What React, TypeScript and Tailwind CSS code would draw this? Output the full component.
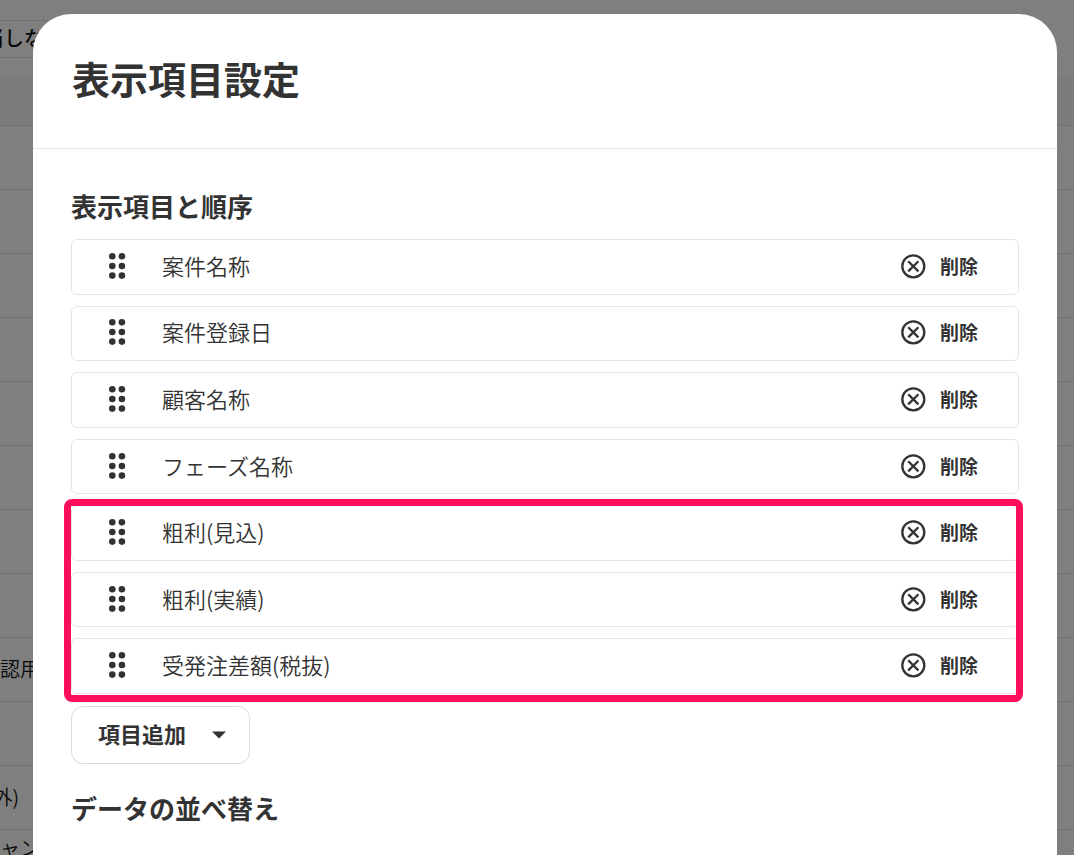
const items = [
  '案件名称',
  '案件登録日',
  '顧客名称',
  'フェーズ名称',
  '粗利(見込)',
  '粗利(実績)',
  '受発注差額(税抜)',
];

const tableRows = ['', '', '', '', '', '', '', '', '確認用', '', '(外)', 'キャンペ'];

function DragHandle() {
  return (
    <svg width="18" height="28" viewBox="0 0 18 28" fill="#333333" aria-hidden="true">
      <circle cx="4.3" cy="4.3" r="3.3" />
      <circle cx="13.9" cy="4.3" r="3.3" />
      <circle cx="4.3" cy="14" r="3.3" />
      <circle cx="13.9" cy="14" r="3.3" />
      <circle cx="4.3" cy="23.6" r="3.3" />
      <circle cx="13.9" cy="23.6" r="3.3" />
    </svg>
  );
}

function CircleX() {
  return (
    <svg width="26" height="26" viewBox="0 0 26 26" fill="none" stroke="#333333" strokeWidth="2.3" aria-hidden="true">
      <circle cx="13.3" cy="13.3" r="11" />
      <path d="M8.2 8.2 18.4 18.4M18.4 8.2 8.2 18.4" />
    </svg>
  );
}

function ItemRow({ name }: { name: string }) {
  return (
    <li className="flex min-h-0 flex-1 items-center rounded-md border border-[#e5e5e5] bg-white pr-10 pb-[2px] pl-9">
      <button type="button" aria-label={`${name}を移動`} className="cursor-grab">
        <DragHandle />
      </button>
      <span className="ml-9 flex-1 pb-[2px] text-[22px] leading-8 font-[350]">{name}</span>
      <button type="button" className="flex items-center gap-[14px] text-[19px] leading-7 font-bold">
        <CircleX />
        削除
      </button>
    </li>
  );
}

function BackgroundPage() {
  return (
    <div aria-hidden="true" className="absolute inset-0 overflow-hidden bg-white pt-5 text-[#111111]">
      <div className="flex h-[38px] w-1/2 items-center border-y border-[#e0e0e0] pb-[2px]">
        <span className="-ml-[16px] text-[20px] leading-7 font-medium">当しない</span>
      </div>
      <table className="mt-[19px] w-full border-collapse text-left">
        <thead>
          <tr className="h-12 border-b border-[#e0e0e0] bg-[#f6f6f6]">
            <th />
          </tr>
        </thead>
        <tbody>
          {tableRows.map((text, i) => (
            <tr key={i} className="h-16 border-b border-[#e0e0e0]">
              <td className={i === 11 ? 'pt-1 align-top' : 'align-middle'}>
                <span
                  className={
                    i === 10
                      ? '-ml-[14px] block text-[20px] leading-7 font-[350]'
                      : '-ml-[20px] block text-[20px] leading-7 font-[350]'
                  }
                >
                  {text}
                </span>
              </td>
            </tr>
          ))}
        </tbody>
      </table>
    </div>
  );
}

export default function App() {
  return (
    <div className="relative min-h-screen overflow-hidden font-['Noto_Sans_CJK_JP',sans-serif] text-[#333333]">
      <BackgroundPage />
      <div className="absolute inset-0 bg-black/50" />
      <main className="relative mt-[14px] mr-[17px] ml-[33px] min-h-screen rounded-t-[38px] bg-white">
        <header className="border-b border-[#e5e5e5] px-[39px] pt-[38px] pb-11">
          <h1 className="text-[38px] leading-[52px] font-bold">表示項目設定</h1>
        </header>
        <div className="px-[38px] pt-[39px]">
          <h2 className="text-[26px] leading-9 font-bold">表示項目と順序</h2>
          <div className="relative mt-[15px]">
            <ul className="flex h-[455px] flex-col gap-[11px]">
              {items.map((name) => (
                <ItemRow key={name} name={name} />
              ))}
            </ul>
            <div className="pointer-events-none absolute top-[260px] -right-1 -bottom-2 -left-[7px] rounded-lg border-7 border-[#ff0f5b]" />
          </div>
          <button
            type="button"
            className="mt-3 flex h-[58px] items-center gap-[26px] rounded-xl border border-[#d9d9d9] bg-white pr-[23px] pl-[26px] text-[22px] leading-8 font-bold"
          >
            <span className="pb-1">項目追加</span>
            <svg width="14" height="8" viewBox="0 0 14 8" fill="#333333" aria-hidden="true">
              <path d="M0 .5h14L7 7.5z" />
            </svg>
          </button>
          <h2 className="mt-[26px] text-[26px] leading-9 font-bold">データの並べ替え</h2>
        </div>
      </main>
    </div>
  );
}
